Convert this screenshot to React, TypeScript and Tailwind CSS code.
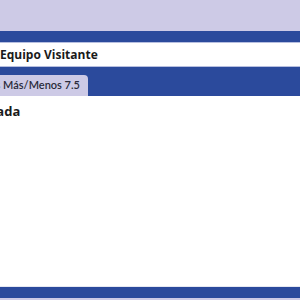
export default function App() {
  return (
    <div
      className="flex h-[300px] w-[300px] flex-col overflow-hidden bg-white text-[#1a1a1a]"
      style={{fontFamily: '"Open Sans", "Noto Sans", sans-serif'}}
    >
      {/* Top bar */}
      <div className="h-[31px] shrink-0 bg-[#cdcae6]" />
      <div className="h-[11px] shrink-0 bg-[#2b4a9c]" />
      <div className="h-px shrink-0 bg-[#b7bfe0]" />

      {/* Team row */}
      <div className="flex h-[23px] shrink-0 items-center overflow-hidden">
        <span className="whitespace-nowrap text-[12px] font-bold">
          Equipo Visitante
        </span>
      </div>

      {/* Tabs */}
      <div className="h-px shrink-0 bg-[#b7bfe0]" />
      <div className="flex h-[29px] shrink-0 items-end overflow-hidden bg-[#2b4a9c]">
        <div className="flex h-[21px] w-[88px] items-center justify-end overflow-hidden rounded-tr-[4px] bg-[#cdcae6] pr-[8px]">
          <span className="shrink-0 whitespace-nowrap font-['Lato'] text-[11px] font-semibold text-[#2a2a3a]">
            Carreras Más/Menos 7.5
          </span>
        </div>
      </div>

      {/* Content */}
      <div className="flex flex-1 flex-col overflow-hidden">
        <div className="flex h-[32px] items-center justify-start overflow-hidden">
          <span className="-ml-[31px] whitespace-nowrap text-[13px] font-bold">
            Entrada
          </span>
        </div>
      </div>

      {/* Footer */}
      <div className="h-px shrink-0 bg-[#e6e8f2]" />
      <div className="h-[11px] shrink-0 bg-[#2b4a9c]" />
      <div className="h-[2px] shrink-0 bg-[#cdcae6]" />
    </div>
  );
}
